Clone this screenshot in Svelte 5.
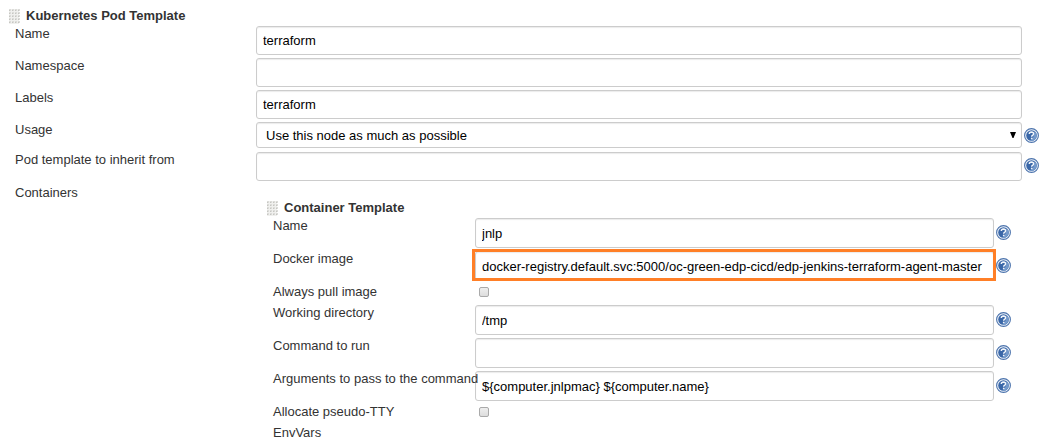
<script lang="ts">
  const podRows = [
    { id: 'pod-name', label: 'Name', value: 'terraform', kind: 'text', help: false },
    { id: 'pod-namespace', label: 'Namespace', value: '', kind: 'text', help: false },
    { id: 'pod-labels', label: 'Labels', value: 'terraform', kind: 'text', help: false },
    { id: 'pod-usage', label: 'Usage', value: 'Use this node as much as possible', kind: 'select', help: true },
    { id: 'pod-inherit', label: 'Pod template to inherit from', value: '', kind: 'text', help: true }
  ];
  const containerRows = [
    { id: 'c-name', label: 'Name', value: 'jnlp', kind: 'text' },
    { id: 'c-image', label: 'Docker image', value: 'docker-registry.default.svc:5000/oc-green-edp-cicd/edp-jenkins-terraform-agent-master', kind: 'text', marked: true },
    { id: 'c-pull', label: 'Always pull image', value: '', kind: 'check' },
    { id: 'c-dir', label: 'Working directory', value: '/tmp', kind: 'text' },
    { id: 'c-command', label: 'Command to run', value: '', kind: 'text' },
    { id: 'c-args', label: 'Arguments to pass to the command', value: '${computer.jnlpmac} ${computer.name}', kind: 'text' },
    { id: 'c-tty', label: 'Allocate pseudo-TTY', value: '', kind: 'check' }
  ];
  const gripRows = [0, 3, 6, 9, 12];
  const gripCols = [0, 3, 6, 9];
</script>

{#snippet grip()}
  <svg class="grip" viewBox="0 0 11 15" width="11" height="15" aria-hidden="true">
    <rect width="10" height="15" fill="#f0f0ee" />
    {#each gripRows as y}
      {#each gripCols as x}
        <rect {x} {y} width="2" height="2" fill="#dcdcd9" />
        <rect x={x} y={y + 1} width="1" height="1" fill="#c6c6c2" />
      {/each}
    {/each}
  </svg>
{/snippet}

{#snippet help(label: string)}
  <button class="help" type="button" aria-label={'Help for ' + label}>
    <svg viewBox="0 0 15 15" width="15" height="15" aria-hidden="true">
      <circle cx="7.5" cy="7.5" r="6.9" fill="#eef3f9" stroke="#4d74ad" stroke-width="1.1" />
      <circle cx="7.5" cy="7.5" r="5.3" fill="#3a67a8" />
      <path d="M10.5 3.2A5.3 5.3 0 0 1 6 12.6Q10.5 9.5 10.5 3.2Z" fill="#7399cb" />
      <path d="M5.3 6Q5.4 4.1 7.5 4.1Q9.6 4.2 9.6 5.8Q9.6 6.8 8.5 7.4Q7.7 7.8 7.7 8.8" fill="none" stroke="#f2f6fb" stroke-width="1.5" />
      <rect x="6.9" y="9.7" width="1.6" height="1.5" fill="#f2f6fb" />
    </svg>
  </button>
{/snippet}

<main>
  <h2>{@render grip()}Kubernetes Pod Template</h2>
  {#each podRows as row}
    <div class="row {row.kind}">
      <label for={row.id}>{row.label}</label>
      {#if row.kind === 'select'}
        <div class="field">
          <select id={row.id}><option>{row.value}</option></select>
          <svg class="arrow" viewBox="0 0 6 6" width="6" height="6" aria-hidden="true"><path d="M0 0H6L3.5 6H2.5Z" fill="#000" /></svg>
        </div>
      {:else}
        <div class="field"><input id={row.id} type="text" value={row.value} /></div>
      {/if}
      {#if row.help}{@render help(row.label)}{/if}
    </div>
  {/each}
  <div class="containers">
    <span>Containers</span>
    <section>
      <h2>{@render grip()}Container Template</h2>
      {#each containerRows as row}
        <div class="row {row.kind}">
          <label for={row.id}>{row.label}</label>
          {#if row.kind === 'check'}
            <div class="field"><input id={row.id} type="checkbox" /></div>
          {:else}
            <div class="field" class:marked={row.marked}><input id={row.id} type="text" value={row.value} /></div>
            {@render help(row.label)}
          {/if}
        </div>
      {/each}
      <div class="row"><span>EnvVars</span></div>
    </section>
  </div>
</main>

<style>
  :global(body) {
    background: #fff;
  }
  main {
    box-sizing: border-box;
    padding: 8px 0 0 9px;
    font: 13px/15px "Liberation Sans", Arial, Helvetica, sans-serif;
    color: #333;
    overflow: hidden;
  }
  h2 {
    display: flex;
    gap: 6px;
    height: 18px;
    margin: 0;
    font: inherit;
    font-weight: bold;
  }
  .grip {
    margin-top: 1px;
    flex: none;
  }
  .row {
    display: grid;
    grid-template-columns: 241px minmax(0, 1fr) 18px;
    align-items: start;
    height: 32px;
    padding-left: 6px;
  }
  .row label,
  .row > span,
  .containers > span {
    white-space: nowrap;
  }
  .row label {
    z-index: 1;
  }
  .select {
    height: 30px;
  }
  .field {
    position: relative;
    display: flex;
  }
  input[type='text'],
  select {
    box-sizing: border-box;
    width: 100%;
    height: 29px;
    margin: 0;
    padding: 0 6px;
    border: 1px solid #ccc;
    border-radius: 3px;
    background: #fff;
    box-shadow: inset 0 1px 1px rgba(0, 0, 0, 0.08);
    color: #000;
    font: inherit;
  }
  select {
    height: 26px;
    padding: 0 9px;
    appearance: none;
  }
  .arrow {
    position: absolute;
    top: 10px;
    right: 6px;
    pointer-events: none;
  }
  .help {
    display: flex;
    margin: 6px 0 0 2px;
    padding: 0;
    border: 0;
    background: none;
  }
  .containers {
    display: grid;
    grid-template-columns: 252px minmax(0, 1fr);
    padding: 1px 28px 0 6px;
  }
  section {
    padding-top: 15px;
  }
  section .row {
    grid-template-columns: 202px minmax(0, 1fr) 18px;
    height: 33px;
  }
  section .check {
    height: 21px;
  }
  section input[type='text'] {
    height: 30px;
  }
  section .help {
    margin-top: 7px;
  }
  .marked::after {
    content: '';
    position: absolute;
    inset: -2px -2px 0 -3px;
    border: 3px solid #ff7f27;
    pointer-events: none;
  }
  input[type='checkbox'] {
    appearance: none;
    box-sizing: border-box;
    width: 10px;
    height: 10px;
    margin: 3px 4px;
    border: 1px solid #aaa;
    border-radius: 2px;
    background: linear-gradient(#eee, #ddd);
  }
  section .row:last-child {
    height: 15px;
  }
</style>
